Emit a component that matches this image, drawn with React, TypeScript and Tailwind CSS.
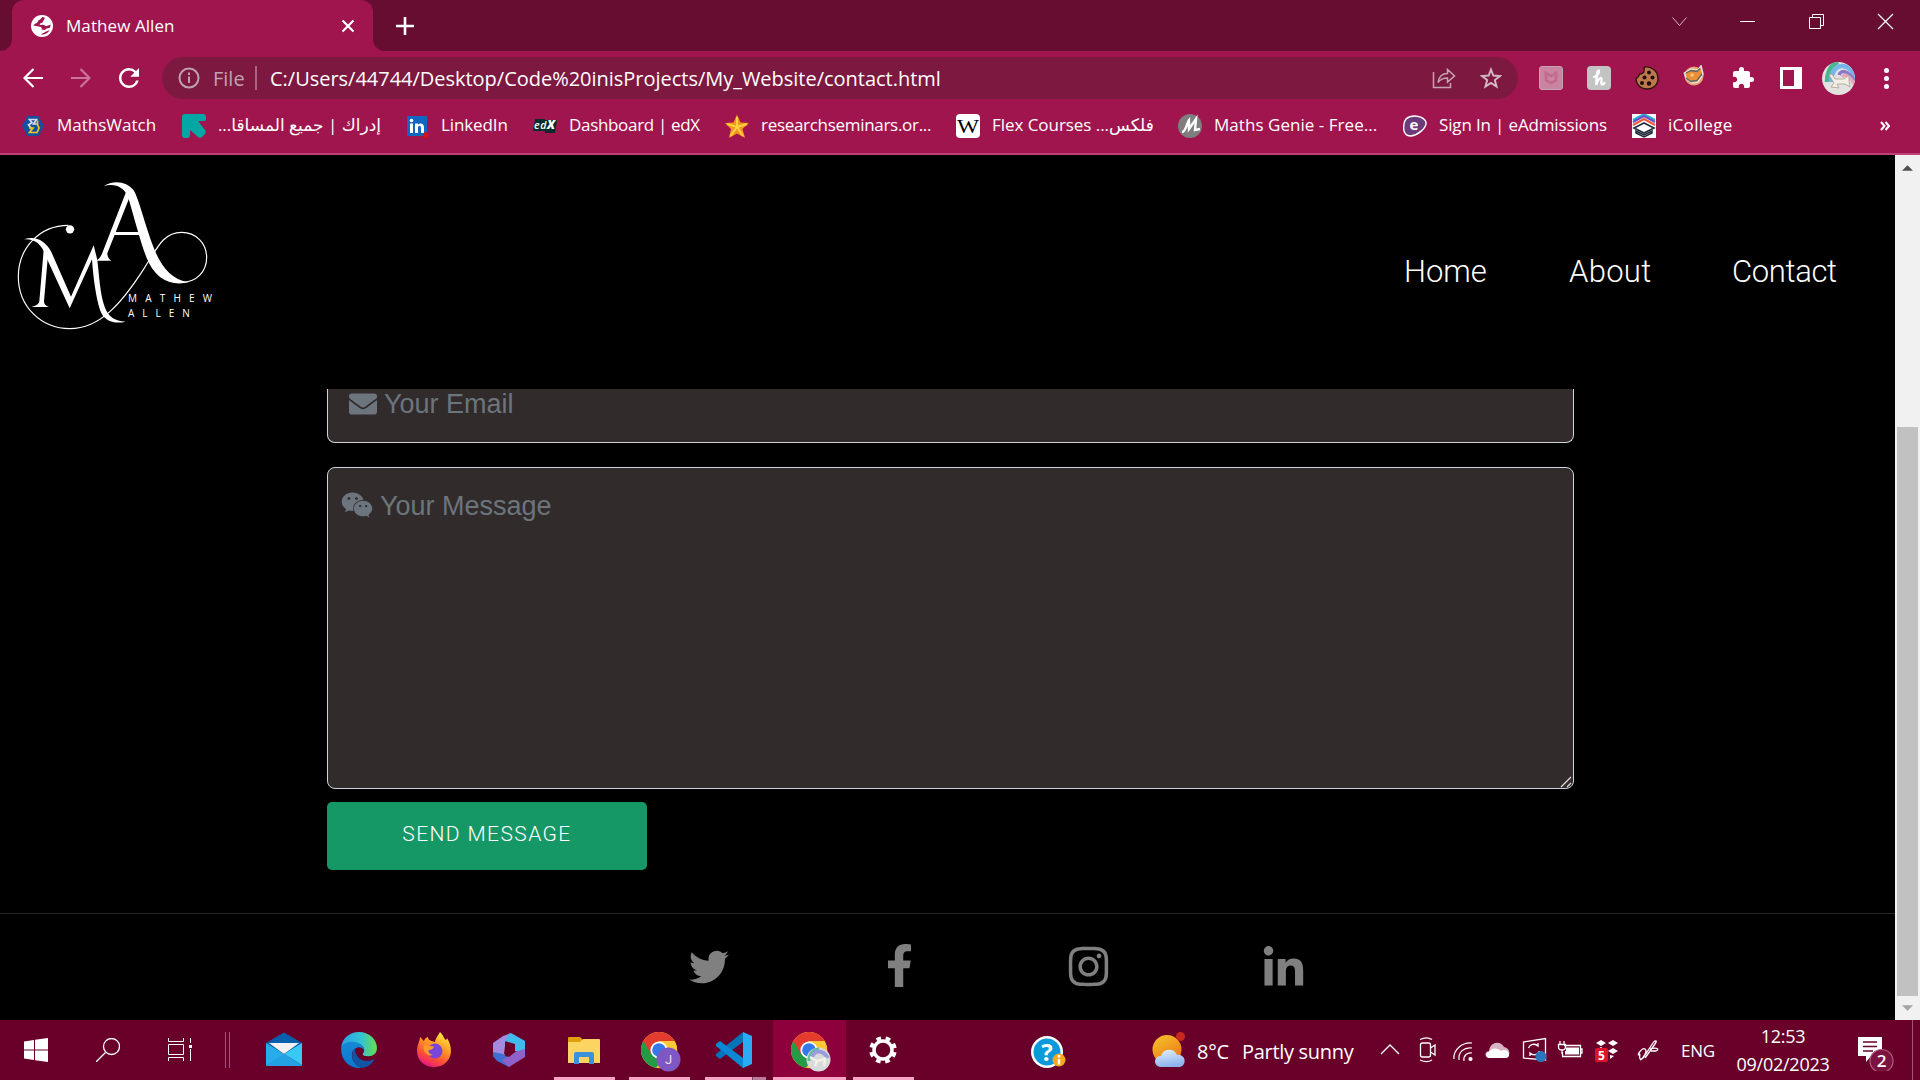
import React from "react";
import { FaEnvelope, FaFacebookF, FaInstagram, FaLinkedinIn, FaTwitter, FaWeixin } from "react-icons/fa";
import { MdExtension, MdRefresh } from "react-icons/md";

type Kids = { children?: React.ReactNode };

/* ---------- small drawings ---------- */

function Chrome({ children }: Kids) {
  return (
    <svg viewBox="0 0 40 40" className="h-10 w-10">
      <circle cx="18" cy="18" r="18" fill="#fbc934" />
      <path d="M18 18 L2.4 9 A18 18 0 0 0 15 35.800 L25 23 Z" fill="#259b45" />
      <path d="M2.400 9 A18 18 0 0 1 33.600 9 L18 9 L10 22 Z" fill="#e33b2e" />
      <path d="M33.600 9 A18 18 0 0 1 16 36 L26 20 L24 9 Z" fill="#fcc934" />
      <circle cx="18" cy="18" r="8.600" fill="#fff" />
      <circle cx="18" cy="18" r="6.800" fill="#3478ea" />
      {children}
    </svg>
  );
}

function Monogram() {
  return (
    <svg viewBox="0 0 720 570" className="h-[190px] w-[240px]" fill="#fff">
      <path
        d="M205 196C118 196 55 265 55 350C55 438 122 506 210 506C300 506 365 430 432 326C474 258 492 217 545 217C588 217 620 250 620 292C620 335 590 367 545 367"
        fill="none"
        stroke="#fff"
        strokeWidth="3.500"
      />
      <circle cx="210" cy="208" r="12.500" />
      <path d="M311 78C338 60 380 62 402 92C416 116 434 190 460 260C482 318 512 358 566 367C508 380 464 354 440 294C422 248 400 164 384 110C372 82 346 68 311 78Z" />
      <path d="M379 94L391 106L322 280C322 290 326 297 334 302H286C298 298 303 290 308 276Z" />
      <path d="M342 216H436V225H339Z" />
      <path d="M72 238C106 226 136 242 154 276L213 410L281 256L292 300C298 350 300 400 313 438C324 470 344 484 377 485C342 493 312 484 300 450C288 412 280 356 276 298L209 445L138 290C126 252 104 236 72 238Z" />
      <path d="M131 270L144 284L132 424C132 433 137 437 147 441H94C108 437 116 434 118 424Z" />
      <text x="384" y="425" fontSize="30" fontWeight="400" textLength="252" fontFamily="'Open Sans', sans-serif">MATHEW</text>
      <text x="384" y="470" fontSize="30" fontWeight="400" textLength="185" fontFamily="'Open Sans', sans-serif">ALLEN</text>
    </svg>
  );
}

/* ---------- browser chrome ---------- */

function TabStrip() {
  return (
    <div className="flex h-[51px] bg-[#660d31] text-white">
      <div className="h-full w-3 bg-[#a0154d]">
        <div className="h-full w-full rounded-br-xl bg-[#660d31]" />
      </div>
      <div className="flex h-full w-[361px] items-center rounded-t-xl bg-[#a0154d] pl-[19px] text-[17px]">
        <svg viewBox="0 0 22 22" className="mr-[13px] h-[22px] w-[22px]">
          <circle cx="11" cy="11" r="11" fill="#fff" />
          <path d="M11.500 2C10 3 10 4.500 8 5C6.500 6 7 8 4.500 8.500C3.500 9 3 10 2.200 10.500C4.500 11 5.500 11 8 11.500C10.500 12 11.500 13 10.500 14.500L13.500 15C15 14.500 15 13 18.500 13C20 11 19.500 9.500 19.500 9.500C17 11 14.500 11.500 13 10C11.500 9.500 9.500 10.500 8.500 9.500C9 7.500 12 8.500 12 6.500C12.500 5 14 4.500 13.500 2.500Z" fill="#a0154d" />
          <path d="M2.300 12C4 12 5 14 7 14.500C9 15 8 17 9.500 18L9 19.700C5 19 2.500 16 2.300 12Z" fill="#a0154d" opacity=".0" />
          <path d="M10 19.700C11 18 13 18.500 14 17C15.500 16 17.500 16 18.800 14.500C17.500 18 14 20 10 19.700Z" fill="#a0154d" />
        </svg>
        <span className="w-[275px] whitespace-nowrap tracking-[0.08px]">Mathew Allen</span>
        <svg viewBox="0 0 14 14" className="h-[14px] w-[14px]" stroke="#fff" strokeWidth="2.200">
          <path d="M1.500 1.500 12.500 12.500M12.500 1.500 1.500 12.500" />
        </svg>
      </div>
      <div className="h-full w-3 bg-[#a0154d]">
        <div className="h-full w-full rounded-bl-xl bg-[#660d31]" />
      </div>
      <svg viewBox="0 0 18 18" className="ml-[11px] mt-[17px] h-[18px] w-[18px]" stroke="#fff" strokeWidth="2.600">
        <path d="M9 0V18M0 9H18" />
      </svg>
      <div className="ml-auto flex h-[43px] w-[276px] items-center">
        <svg viewBox="0 0 276 43" className="h-[43px] w-[276px]" fill="none" stroke="#fff">
          <path d="M28.500 17.500 35.500 25.500 42.500 17.500" strokeWidth="1" stroke="#d9b9c6" />
          <path d="M96 21.500H111" />
          <path d="M165.500 17.500H176.500V28.500H165.500ZM168.500 17V14.500H179.500V25.500H177" />
          <path d="M234 14 249 29M249 14 234 29" strokeWidth="1.200" />
        </svg>
      </div>
    </div>
  );
}

function Toolbar() {
  return (
    <div className="flex h-[54px] items-center bg-[#a0154d] text-white">
      <svg viewBox="0 0 20 20" className="ml-[23px] h-5 w-5" fill="none" stroke="#fff" strokeWidth="2.200">
        <path d="M20 10H1.500M10.500 1 1.500 10 10.500 19" />
      </svg>
      <svg viewBox="0 0 20 20" className="ml-[28px] h-5 w-5" fill="none" stroke="#ca7598" strokeWidth="2.200">
        <path d="M0 10H18.500M9.500 1 18.500 10 9.500 19" />
      </svg>
      <MdRefresh className="ml-[23px] h-[30px] w-[30px]" />
      <div className="ml-[18px] flex h-[42px] w-[1356px] shrink-0 items-center rounded-full bg-[#7d1840]">
        <svg viewBox="0 0 22 22" className="ml-[16px] h-[22px] w-[22px]" fill="none" stroke="#bda3af" strokeWidth="2">
          <circle cx="11" cy="11" r="9.500" />
          <path d="M11 9.500V16M11 5.500V8" />
        </svg>
        <span className="ml-[13px] mt-[2px] w-[42px] text-[20px] text-[#bda3af]">File</span>
        <span className="h-6 w-[2px] bg-[#a66580]" />
        <span className="ml-[13px] mt-[2px] whitespace-nowrap text-[20px] tracking-[-0.02px]">
          C:/Users/44744/Desktop/Code%20inisProjects/My_Website/contact.html
        </span>
        <svg viewBox="0 0 24 24" className="ml-auto mr-[24px] h-6 w-6" fill="none" stroke="#c5a4b2" strokeWidth="1.500">
          <path d="M1.500 6V21.500H18.500V17M6 16.500C7 10 11 7.500 15.500 7.500V3.500L22.500 10 15.500 16V12C11.500 12 8.500 13 6 16.500Z" />
        </svg>
        <svg viewBox="0 0 22 22" className="mr-[16px] h-[22px] w-[22px]" fill="none" stroke="#d5b9c4" strokeWidth="1.900">
          <path d="M11 2.500 13.300 8.500 20 9 14.800 13 16.600 19.600 11 16 5.400 19.600 7.200 13 2 9 8.700 8.500Z" />
        </svg>
      </div>
      <div className="ml-[21px] flex h-6 w-6 items-center justify-center rounded-[3px] border border-[#c3a5b2] bg-[#c984a2]">
        <svg viewBox="0 0 14 14" className="h-[14px] w-[14px]" fill="none" stroke="#c4698f" strokeWidth="2.600">
          <path d="M2 2V9.500L7 12 12 9.500V2L7 5Z" />
        </svg>
      </div>
      <div className="ml-6 flex h-6 w-6 items-center justify-center rounded bg-[#c3c3c3]">
        <svg viewBox="0 0 24 24" className="h-6 w-6" fill="none" stroke="#fff" strokeWidth="2.300" strokeLinecap="round">
          <path d="M7 11C10 10 12.500 7 12 5C11 3.500 9.500 6 9.300 19C10.500 13 14 11 14.500 12.500C15 14 13.500 18 15 18.500C16 18.600 17 18 17.500 17" />
        </svg>
      </div>
      <svg viewBox="0 0 24 24" className="ml-6 h-6 w-6">
        <path d="M10 1C16 0 23 5 23 12.500C23 19 18 23 12 23C6 23 1.500 19 1 13C1.500 11 4 12 4 9C5 7 7.500 8.500 8.500 6.500C10 5 8 2 10 1Z" fill="#bf7849" stroke="#2c1510" strokeWidth="1.400" />
        <g fill="#1d0d0c">
          <circle cx="14" cy="6.500" r="2" /><circle cx="9.500" cy="11.500" r="2" /><circle cx="17.500" cy="11.500" r="2" />
          <circle cx="7" cy="17" r="2" /><circle cx="14" cy="17.500" r="2.200" />
        </g>
      </svg>
      <svg viewBox="0 0 22 22" className="mb-1 ml-[24px] h-[22px] w-[22px]">
        <circle cx="11" cy="11" r="9.500" fill="#e8a071" />
        <path d="M1.500 8 8 4 15 5 18 1 20 9 15 17 9 18 3 13Z" fill="#ea8f36" stroke="#e8e0d4" strokeWidth="1.600" />
        <path d="M3 8 8 5.500 14 6.500 17 3.500M3 13 8 16.500 14 15.500 19 9" stroke="#596366" strokeWidth="1.300" fill="none" />
        <circle cx="9" cy="10" r="1.800" fill="#f9c675" />
      </svg>
      <MdExtension className="ml-[26px] h-6 w-6" />
      <div className="ml-[25px] h-[22px] w-[22px] border-y-[3px] border-l-[3px] border-r-[8px] border-white" />
      <svg viewBox="0 0 33 33" className="ml-[20px] h-[33px] w-[33px]">
        <defs><clipPath id="avatar"><circle cx="16.500" cy="16.500" r="16.500" /></clipPath></defs>
        <g clipPath="url(#avatar)">
          <rect width="33" height="33" fill="#e4e2e1" />
          <g fill="none" strokeWidth="4.500">
            <path d="M5 20C5 10 9 3 16 0" stroke="#48b78d" />
            <path d="M9 20C9 12 13 4 20 4C27 4 33 11 34 18" stroke="#77b6ea" />
            <path d="M17 13C19 7 27 9 32 19" stroke="#8a78c8" strokeWidth="3.500" />
            <path d="M20 15C23 11 28 14 32 22" stroke="#e4a7bd" strokeWidth="3.500" />
          </g>
          <path d="M7 13 10 12 13 17 22 17 27 13 27 19 28 25 23 22 15 22 17 26 9 25 12 21Z" fill="#f3eee3" stroke="#a79f90" strokeWidth=".8" />
        </g>
      </svg>
      <div className="ml-[29px] flex flex-col gap-[3px]">
        <i className="h-[5px] w-[5px] rounded-full bg-white" />
        <i className="h-[5px] w-[5px] rounded-full bg-white" />
        <i className="h-[5px] w-[5px] rounded-full bg-white" />
      </div>
    </div>
  );
}

function Bookmark({ icon, width, label, className = "" }: { icon: React.ReactNode; width: string; label: string; className?: string }) {
  return (
    <div className={`flex shrink-0 items-center ${width}`}>
      <svg viewBox="0 0 24 24" className="mr-[12px] h-6 w-6 shrink-0">{icon}</svg>
      <span className={`mb-[2px] whitespace-nowrap ${className}`}>{label}</span>
    </div>
  );
}

function Bookmarks() {
  return (
    <div className="flex h-[50px] items-center border-b-2 border-[#bd4377] bg-[#a0154d] pb-[6px] pl-[21px] text-[17px] text-white">
      <Bookmark
        width="w-[161px]"
        label="MathsWatch"
        icon={
          <g>
            <path d="M6.500 2H17.500L23 12 17.500 22H6.500L1 12Z" fill="#1450a0" />
            <path d="M10.500 14.500 7.500 11 11 8.500 8.500 5.500H15.500L12.500 10H16.500" fill="none" stroke="#d2dbe8" strokeWidth="1.700" />
            <path d="M16.500 6.500V10.500L18 14 16 18.500H8.500L12 14H8" fill="none" stroke="#f1c51d" strokeWidth="1.700" />
          </g>
        }
      />
      <div className="flex w-[223px] shrink-0 items-center">
        <svg viewBox="0 0 24 24" className="mr-[12px] h-6 w-6 shrink-0">
          <path d="M3 0H21Q24 0 24 3V6Q24 7 22 7H16L23 16Q24.500 18 23 20L20 23Q18 24.500 16 23L8 16V21Q8 24 5 24H3Q0 24 0 21V3Q0 0 3 0Z" fill="#00a7a5" />
        </svg>
        <span dir="rtl" className="mb-[2px] w-[163px] whitespace-nowrap text-[17px]">إدراك | جميع المساقا...</span>
      </div>
      <Bookmark
        width="w-[128px]"
        label="LinkedIn"
        className="tracking-[-0.1px]"
        icon={
          <g>
            <rect x="2" y="2" width="20" height="20" rx="1" fill="#1066c2" />
            <path d="M5 9.500H8V19H5ZM10 9.500H13V11C14 9 19 8.500 19 13.500V19H16V14C16 11 13 11 13 14V19H10Z" fill="#fff" />
            <circle cx="6.500" cy="6.500" r="1.800" fill="#fff" />
            <circle cx="20.500" cy="21" r="2.700" fill="#d41414" />
          </g>
        }
      />
      <Bookmark
        width="w-[192px]"
        label="Dashboard | edX"
        className="tracking-[-0.32px]"
        icon={
          <g>
            <path d="M2 5H12V6H24L22 19H12V17H0Z" fill="#072c2e" />
            <text x="1" y="15" fontSize="10.500" fontWeight="600" fontStyle="italic" fill="#fff" fontFamily="'Open Sans', sans-serif" textLength="21">ed<tspan fontSize="12" fontWeight="800">X</tspan></text>
          </g>
        }
      />
      <Bookmark
        width="w-[231px]"
        label="researchseminars.or..."
        className="tracking-[-0.3px]"
        icon={
          <g>
            <path d="M12 .5 15.500 8.500 24 9 17.500 15 20 24 12 19.500 4 24 6 15 0 9 8.500 8.500Z" fill="#f79420" />
            <path d="M12 3 12 13 2 10M12 13 5.500 22M12 13 22 10M12 13 18 22" stroke="#fcd33d" strokeWidth="2" fill="none" />
          </g>
        }
      />
      <Bookmark
        width="w-[222px]"
        label="Flex Courses ...فلكس"
        className="tracking-[-0.05px]"
        icon={
          <g>
            <rect width="24" height="24" rx="4" fill="#fff" />
            <text x="1" y="18.500" fontSize="19" fontFamily="'Liberation Serif', serif" textLength="22" lengthAdjust="spacingAndGlyphs">W</text>
          </g>
        }
      />
      <Bookmark
        width="w-[225px]"
        label="Maths Genie - Free..."
        className="tracking-[0.04px]"
        icon={
          <g>
            <circle cx="12" cy="12" r="12" fill="#7e7e7e" />
            <path d="M4 18C8 18 9 8 11 6L11 15 18 5 17 16 22 15" fill="none" stroke="#fff" strokeWidth="2.400" />
          </g>
        }
      />
      <Bookmark
        width="w-[229px]"
        label="Sign In | eAdmissions"
        className="tracking-[-0.15px]"
        icon={
          <g>
            <path d="M3 5C8 .5 20 1 23 8C24 14 15 21 8 22C1 22 0 16 1 10Q1.500 7 3 5Z" fill="#6c3b7b" stroke="#fff" strokeWidth="1.400" />
            <text x="6.500" y="16" fontSize="15" fontWeight="700" fill="#fff" fontFamily="'Open Sans', sans-serif">e</text>
          </g>
        }
      />
      <Bookmark
        width="w-[248px]"
        label="iCollege"
        className="tracking-[0.3px]"
        icon={
          <g fill="none" strokeWidth="2">
            <rect width="24" height="24" fill="#fff" />
            <path d="M1 6 12 0 23 6" stroke="#28b5cb" />
            <path d="M1 8 12 2 23 8" stroke="#6a4fd0" />
            <path d="M1 11 12 5 23 11" stroke="#f05a38" />
            <path d="M2 14 12 9 22 14 12 19Z" stroke="#222c3c" strokeWidth="1.600" />
            <path d="M4 17V19L12 23 20 19V17L12 21Z" stroke="#222c3c" strokeWidth="1.500" />
          </g>
        }
      />
      <svg viewBox="0 0 10 10" className="h-[10px] w-[10px]" fill="none" stroke="#fff" strokeWidth="2">
        <path d="M1 1 4.500 5 1 9M5.500 1 9 5 5.500 9" />
      </svg>
    </div>
  );
}

/* ---------- web page ---------- */

function Page() {
  return (
    <div className="flex h-[865px] bg-black">
      <main className="flex w-[1895px] flex-col">
        <header className="flex h-[234px] pt-[5px] font-['Roboto',sans-serif] text-[31px] font-light text-white">
          <Monogram />
          <nav className="ml-auto mt-[91px] flex whitespace-nowrap leading-[42px]">
            <a className="w-[165px]">Home</a>
            <a className="w-[163px] tracking-[0.3px]">About</a>
            <a className="w-[163px] tracking-[-0.35px]">Contact</a>
          </nav>
        </header>
        <form className="ml-[327px] w-[1247px] font-['Liberation_Sans',sans-serif] text-[27px] text-[#6c757d]">
          <div className="flex h-[54px] rounded-b-lg border border-t-0 border-[#ced4da] bg-[#322b2b] pl-[21px]">
            <FaEnvelope className="mt-[1px] h-[28px] w-[28px]" />
            <span className="ml-[7px] mt-[1px] leading-[29px]">Your Email</span>
          </div>
          <div className="relative mt-6 flex h-[322px] rounded-lg border border-[#ced4da] bg-[#322b2b] pl-[13px]">
            <FaWeixin className="mt-[21px] h-[32px] w-[32px]" />
            <span className="ml-[7px] mt-[17px] leading-[42px]">Your Message</span>
            <svg viewBox="0 0 12 12" className="absolute bottom-0 right-px h-3 w-3" stroke="#dedede" strokeWidth="1.300">
              <path d="M1 11 11 1M7 11 11 7" />
            </svg>
          </div>
          <button
            type="button"
            className="mt-[13px] block h-[68px] w-[320px] rounded-[5px] bg-[#169866] pb-[2px] font-['Roboto',sans-serif] text-[21px] font-light tracking-[1.400px] text-white"
          >
            SEND MESSAGE
          </button>
        </form>
        <footer className="mt-[43px] flex h-[107px] items-center border-t border-[#262626] pl-[689px] text-[#808080]">
          <FaTwitter className="h-10 w-10" />
          <FaFacebookF className="ml-[149px] mt-[-3px] h-[43px] w-[43px]" />
          <FaInstagram className="ml-[145px] mt-[-1px] h-[45px] w-[45px]" />
          <FaLinkedinIn className="ml-[150px] mt-[2px] h-[45px] w-[45px]" />
        </footer>
      </main>
      <div className="flex w-[25px] flex-col items-center bg-[#f1f1f1]">
        <svg viewBox="0 0 12 6" className="mt-[10px] h-[6px] w-[11px]"><path d="M0 6 6 0 12 6Z" fill="#505050" /></svg>
        <div className="mt-[256px] h-[569px] w-[21px] bg-[#c1c1c1]" />
        <svg viewBox="0 0 12 6" className="mt-[9px] h-[6px] w-[11px]"><path d="M0 0 6 6 12 0Z" fill="#a3a3a3" /></svg>
      </div>
    </div>
  );
}

/* ---------- taskbar ---------- */

function TaskApp({ children, bar }: Kids & { bar?: boolean }) {
  return (
    <div className="flex h-[60px] w-[75px] shrink-0 flex-col items-center">
      <div className="flex h-[57px] items-center pr-px pt-[3px]">{children}</div>
      {bar && <div className="h-[3px] w-[61px] bg-[#f9a5c8]" />}
    </div>
  );
}

function Taskbar() {
  return (
    <div className="flex h-[60px] items-center bg-[#68002a] text-[17px] text-white">
      <svg viewBox="0 0 24 24" className="ml-6 h-6 w-6" fill="#fff">
        <path d="M0 3.500 10 2V11.500H0ZM11 1.800 24 0V11.500H11ZM0 12.500H10V22L0 20.500ZM11 12.500H24V24L11 22.200Z" />
      </svg>
      <svg viewBox="0 0 24 24" className="ml-12 h-6 w-6" fill="none" stroke="#fff" strokeWidth="1.300">
        <circle cx="15.500" cy="8.500" r="8" /><path d="M9.500 14.500 0 24" />
      </svg>
      <svg viewBox="0 0 24 24" className="ml-12 h-6 w-6" fill="none" stroke="#fff">
        <path d="M.5 0V3.500H15.500V0M.5 6.500H15.500V16.500H.5ZM.5 23V19.500H15.500V23M22.500 0V5M22.500 11V23" />
        <path d="M21 7H24V10H21Z" fill="#fff" stroke="none" />
      </svg>
      <div className="ml-[33px] mr-[17px] h-9 w-[5px] border-x border-[#98567a]" />
      <TaskApp>
        <svg viewBox="0 0 36 36" className="h-9 w-9">
          <path d="M0 11 18 .5 36 11V20H0Z" fill="#075fae" />
          <path d="M3 11H33L18 22Z" fill="#f2f2f2" />
          <path d="M0 11 18 22 36 33Q36 34 35 34H1Q0 34 0 33Z" fill="#27aeea" />
          <path d="M36 11V33L18 22Z" fill="#38c9f6" />
          <path d="M36 33 18 22 0 33Q0 34 1 34H35Z" fill="#1b8bd6" opacity=".35" />
        </svg>
      </TaskApp>
      <TaskApp>
        <svg viewBox="0 0 36 36" className="h-9 w-9">
          <defs>
            <linearGradient id="edgeTop"><stop offset="0" stopColor="#299fe2" /><stop offset=".55" stopColor="#32c2d5" /><stop offset="1" stopColor="#65de4b" /></linearGradient>
            <linearGradient id="edgeSide" x2="0" y2="1"><stop stopColor="#1688d4" /><stop offset="1" stopColor="#0879d0" /></linearGradient>
          </defs>
          <path d="M0 16C1 6 9 0 18 0C29 0 36 8 36 16C36 22 31 25 26 24C21 24 21 22 23 20C24 17 22 12 15 11C8 10 2 12 0 16Z" fill="url(#edgeTop)" />
          <path d="M0 16C3 10 9 9 14 10C20 11 23 15 23 18C20 13 13 15 11 21C10 29 16 35 21 36C10 37 0 30 0 16Z" fill="url(#edgeSide)" />
          <path d="M14 16C8 22 12 34 21 36C27 35 31 32 33 28C33 27 32 27 31 28C22 31 14 26 14 16Z" fill="#0f55a3" />
        </svg>
      </TaskApp>
      <TaskApp>
        <svg viewBox="0 0 36 36" className="h-9 w-9">
          <defs>
            <linearGradient id="fox" x1=".8" y1="0" x2=".3" y2="1"><stop stopColor="#fff148" /><stop offset=".4" stopColor="#ff9a26" /><stop offset=".75" stopColor="#ff483c" /><stop offset="1" stopColor="#e31587" /></linearGradient>
          </defs>
          <path d="M24 0C28 4 28 7 30 8C31 7 31 6 31 6C35 12 35 18 35 20C34 29 27 35 18 35C9 35 1 29 1 19C1 13 4 9 4 5C6 6 7 9 8 9C9 6 11 5 12 5C12 8 15 9 19 10C20 5 22 4 24 0Z" fill="url(#fox)" />
          <circle cx="19" cy="19" r="7.500" fill="#7947d8" />
          <path d="M8 13C12 12 12 15 17 14C19 15 16 18 13 18C11 20 15 23 17 23C11 25 6 19 8 13Z" fill="#ff9c27" />
        </svg>
      </TaskApp>
      <TaskApp>
        <svg viewBox="0 0 36 36" className="h-9 w-9">
          <path d="M12 4 20 1 14 10V23L9 27 2 24V11Z" fill="#a58ae0" />
          <path d="M2 20 12 22 22 29 18 35 6 29 2 24Z" fill="#3c6fd0" />
          <path d="M20 1 34 9V22L24 19V12L14 9 18 2Z" fill="#40bbec" />
          <path d="M34 17V25L18 35 11 28 24 20Z" fill="#9061c9" />
          <path d="M14 14 18 11 24 14V20L18 25 13 22Z" fill="#68002a" />
        </svg>
      </TaskApp>
      <TaskApp bar>
        <svg viewBox="0 0 32 27" className="h-[27px] w-8">
          <path d="M0 1Q0 0 1 0H12L15 3V6H0Z" fill="#e3a00e" />
          <path d="M0 5H12L15 2H31Q32 2 32 3V26H0Z" fill="#fcd462" />
          <path d="M6 27V17Q6 15 8 15H24Q26 15 26 17V27H21V20H11V27Z" fill="#3c91dc" />
        </svg>
      </TaskApp>
      <TaskApp bar>
        <div className="ml-[3px] mt-[4px]">
          <Chrome>
            <circle cx="27.500" cy="27.500" r="12" fill="#7e57c2" />
            <text x="27.500" y="32" textAnchor="middle" fontSize="13" fill="#e8defa" fontFamily="Roboto, sans-serif">J</text>
          </Chrome>
        </div>
      </TaskApp>
      <div className="flex h-[60px] w-[76px] shrink-0 flex-col items-center">
        <div className="flex h-[57px] items-center pr-[2px] pt-[2px]">
          <svg viewBox="0 0 36 36" className="h-9 w-9">
            <path d="M27 0 36 4V32L27 36Z" fill="#2aabf3" />
            <path d="M27 10 4 27 0 24V22L27 0Z" fill="#0073b9" />
            <path d="M27 26 4 9 0 12V14L27 36Z" fill="#0a88d3" />
          </svg>
        </div>
        <div className="flex h-[3px] w-[61px]">
          <div className="w-[47px] bg-[#f9a5c8]" />
          <div className="w-[14px] border-l border-[#744b60] bg-[#bd7b9b]" />
        </div>
      </div>
      <div className="flex h-[60px] w-[73px] shrink-0 flex-col items-center border-b-[3px] border-[#f9a5c8] bg-[#8d003c] pl-[3px] pt-[12px]">
        <Chrome>
          <circle cx="27.500" cy="27.500" r="12" fill="#d8dadb" />
          <path d="M18 29C18 21 23 17 28 17" fill="none" stroke="#62bd9c" strokeWidth="3" />
          <path d="M21 25C24 17 32 18 37 26" fill="none" stroke="#9a9ddd" strokeWidth="4" />
          <path d="M19 25 26 29 34 27 33 34M26 29 24 34" fill="none" stroke="#f4f0e9" strokeWidth="2.500" />
        </Chrome>
      </div>
      <TaskApp bar>
        <svg viewBox="0 0 28 28" className="h-7 w-7" fill="none" stroke="#fff">
          <circle cx="14" cy="14" r="9" strokeWidth="3.500" />
          <circle cx="14" cy="14" r="11.800" strokeWidth="4" strokeDasharray="4.600 4.668" strokeDashoffset="-2.300" />
        </svg>
      </TaskApp>
      <svg viewBox="0 0 36 36" className="ml-[110px] mr-[85px] mt-[3px] h-9 w-9 shrink-0">
        <circle cx="16" cy="18" r="16" fill="#fff" /><circle cx="16" cy="18" r="13.500" fill="#0a9adb" />
        <text x="16" y="26.500" textAnchor="middle" fontSize="24" fontWeight="700" fill="#fff" fontFamily="'Open Sans', sans-serif">?</text>
        <circle cx="28" cy="26" r="6.500" fill="#f6a81c" />
        <path d="M28 25V30.500M28 21V23.500" stroke="#fff" strokeWidth="2.500" />
      </svg>
      <svg viewBox="0 0 36 36" className="h-9 w-9 shrink-0">
        <defs><linearGradient id="sun" x2=".6" y2="1"><stop stopColor="#f6c52e" /><stop offset="1" stopColor="#ec7a12" /></linearGradient>
          <linearGradient id="cloud" x2=".3" y2="1"><stop stopColor="#e6f1ff" /><stop offset="1" stopColor="#8cb5ee" /></linearGradient></defs>
        <circle cx="15" cy="17.500" r="14.500" fill="url(#sun)" />
        <circle cx="28.500" cy="4.500" r="4.500" fill="#c9291d" />
        <path d="M8 35A5.500 5.500 0 0 1 9 24A8.500 8.500 0 0 1 25 23A6 6 0 0 1 28 35Z" fill="url(#cloud)" />
      </svg>
      <span className="ml-[9px] mt-[4px] w-[45px] shrink-0 whitespace-nowrap text-[20px] tracking-[-0.3px]">8°C</span>
      <span className="mt-[4px] w-[138px] shrink-0 whitespace-nowrap text-[20px] tracking-[-0.3px]">Partly sunny</span>
      <svg viewBox="0 0 301 40" className="h-10 w-[301px] shrink-0" fill="none" stroke="#fff" strokeWidth="1.300">
        <path d="M1 24 10 15 19 24" />
        <g strokeWidth="1.300">
          <rect x="40.500" y="13" width="10" height="14" rx="2" /><path d="M50.500 18 55 15V25L50.500 22M40 9.500C44 7.500 49 7.500 52 9.500M40 30C44 32 49 32 52 30" />
        </g>
        <g strokeWidth="1.200">
          <path d="M74 29C73 20 82 12 92 13M79 30C78 22 84 17 92 18M84 31C83 26 87 22 92 23" />
          <circle cx="90.500" cy="29" r="1.500" fill="#fff" />
        </g>
        <path d="M108 27C105 27 104 22 109 21C110 12 120 10 124 17C129 18 130 22 129 25Z" fill="#d9b5c3" stroke="none" />
        <path d="M109 28C105 28 105 22 109 22C112 17 118 18 121 21C126 18 130 22 129 26Q128 28 126 28Z" fill="#fff" stroke="none" />
        <path d="M143.500 12 165.500 8.500V30L143.500 28Z" />
        <path d="M148.500 18C150 14 155 13 158 16V13M159.500 21C158 25 153 26 150 23V26" />
        <circle cx="161" cy="26.500" r="5.500" fill="#2b75bd" stroke="none" />
        <path d="M184 15.500H200.500V26.500H182.500V22" /><path d="M186 17.500H199V24.500H185V21H186Z" fill="#fff" stroke="none" />
        <path d="M200.500 19H202V23H200.500M180 11V14M184 11V14M178.500 14.500H185.500V17Q185.500 20 182 20T178.500 17ZM182 20V24" />
        <g fill="#fff" stroke="none">
          <path d="M221 10 226 13 221 16 216 13ZM233 10 238 13 233 16 228 13ZM221 17 226 20 221 23 216 20ZM233 18 238 21 233 24 228 21ZM230 25 234 26 230 29Z" />
        </g>
        <rect x="215" y="18" width="13" height="14" rx="2" fill="#e0112b" stroke="none" />
        <text x="221.500" y="30" textAnchor="middle" fontSize="12" fontWeight="700" fill="#fff" stroke="none" fontFamily="'Open Sans', sans-serif">5</text>
        <path d="M260 24C259 28 260 31 263 28L273 13C275 10 278 10 275 14L265 28M260 24C255 28 262 17 265 19C268 21 263 29 260 30M270 19C277 17 280 19 276 21H271" />
      </svg>
      <span className="mt-[2px] w-[53px] shrink-0 whitespace-nowrap text-[17px] tracking-[-0.3px]">ENG</span>
      <div className="flex w-[98px] shrink-0 flex-col items-center whitespace-nowrap text-[18px] leading-[28px] tracking-[-0.25px]">
        <span>12:53</span>
        <span>09/02/2023</span>
      </div>
      <svg viewBox="0 0 40 40" className="ml-[26px] mt-[2px] h-10 w-10 shrink-0">
        <path d="M0 6H24V25H13L8 31V25H0Z" fill="#fff" />
        <path d="M5 11H19M5 15.500H19M5 20H15" stroke="#68002a" strokeWidth="1.500" />
        <circle cx="23.500" cy="30" r="11.500" fill="#7b1240" stroke="#b25f80" strokeWidth="1.200" />
        <text x="23.500" y="36" textAnchor="middle" fontSize="17" fontWeight="600" fill="#fff" fontFamily="'Open Sans', sans-serif">2</text>
      </svg>
      <div className="ml-auto mr-[7px] h-full w-px bg-[#9e5674]" />
    </div>
  );
}

export default function App() {
  return (
    <div className="h-[1080px] w-[1920px] overflow-hidden bg-black font-['Open_Sans','Noto_Sans','DejaVu_Sans',sans-serif]">
      <TabStrip />
      <Toolbar />
      <Bookmarks />
      <Page />
      <Taskbar />
    </div>
  );
}
